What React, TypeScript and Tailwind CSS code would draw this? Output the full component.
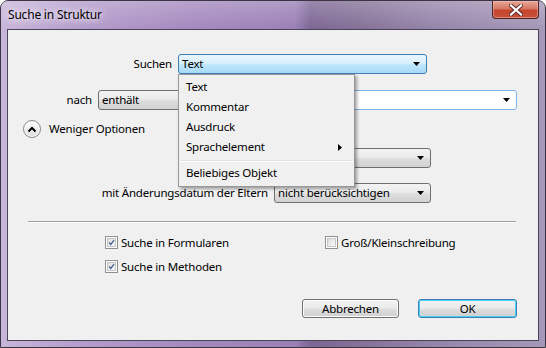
import React from 'react';

type ComboKind = 'plain' | 'focus' | 'edit';

const comboStyles: Record<ComboKind, string> = {
  plain:
    'border-[#707070] bg-[linear-gradient(#f3f3f3_0%,#ebebeb_45%,#dddddd_55%,#d2d2d2_100%)]',
  focus:
    'border-[#3c7fb1] bg-[linear-gradient(#eaf6fd_0%,#d9f0fc_45%,#bee6fd_55%,#a7d9f5_100%)]',
  edit: 'border-[#7eb4ea] bg-white',
};

function DownArrow() {
  return (
    <svg width="7" height="4" viewBox="0 0 7 4" className="shrink-0">
      <path d="M0 0 H7 L3.5 4 Z" fill="#000" />
    </svg>
  );
}

function Combo({ value, kind, className }: { value: string; kind: ComboKind; className: string }) {
  return (
    <div
      className={`flex items-center justify-between h-[20px] rounded-[3px] border pl-[3px] pr-[6px] ${comboStyles[kind]} ${className}`}
    >
      <span className="whitespace-nowrap">{value}</span>
      <DownArrow />
    </div>
  );
}

function CheckBox({ checked, label }: { checked: boolean; label: string }) {
  return (
    <div className="flex items-center h-[13px]">
      <div className="w-[13px] h-[13px] border border-[#8e8f8f] bg-white p-[1px] shrink-0">
        <div className="w-full h-full border border-[#c6c6c6] bg-[linear-gradient(135deg,#dcdcdc,#fbfbfb)] flex items-center justify-center">
          {checked && (
            <svg width="9" height="9" viewBox="0 0 9 9">
              <path d="M1.5 4.5 L3.6 7 L7.8 1.5" stroke="#3d5a8c" strokeWidth="1.6" fill="none" />
            </svg>
          )}
        </div>
      </div>
      <span className="ml-[3px] whitespace-nowrap">{label}</span>
    </div>
  );
}

const menuItems = ['Text', 'Kommentar', 'Ausdruck'];

export default function App() {
  return (
    <div className="w-[546px] h-[348px] overflow-hidden bg-white font-['Noto_Sans',sans-serif] text-[11.5px] tracking-[-0.2px] text-black">
      <div className="w-[546px] h-[348px] rounded-t-[8px] border border-[#3a3444] flex flex-col bg-[linear-gradient(90deg,#c8b6da_0%,#b49ccb_15%,#a489be_35%,#9b80b7_54%,#7c6694_57%,#857197_66%,#9685aa_80%,#a698b8_100%)]">
        {/* title bar */}
        <div className="h-[28px] flex justify-between items-start pl-[7px] pr-[6px] bg-[linear-gradient(180deg,rgba(255,255,255,0.22),rgba(255,255,255,0))]">
          <span className="mt-[5px] text-[12px] [text-shadow:0_0_6px_#fff,0_0_10px_#f0e8f8]">
            Suche in Struktur
          </span>
          <div className="w-[47px] h-[18px] rounded-b-[4px] border border-t-0 border-[#4b2626] bg-[linear-gradient(180deg,#e6a99a_0%,#d47863_45%,#c4432c_55%,#c9523b_100%)] flex items-center justify-center shadow-[inset_0_0_0_1px_rgba(255,200,190,0.45)]">
            <svg width="14" height="12" viewBox="0 0 14 12">
              <path d="M2 1.5 L12 10.5 M12 1.5 L2 10.5" stroke="#5a2a2a" strokeWidth="4" strokeLinecap="square" />
              <path d="M2 1.5 L12 10.5 M12 1.5 L2 10.5" stroke="#fff" strokeWidth="2.2" strokeLinecap="square" />
            </svg>
          </div>
        </div>

        {/* client area */}
        <div className="relative mx-[6px] h-[312px] border border-[#4a4458] bg-[#f0f0f0] flex flex-col">
          {/* Suchen */}
          <div className="flex items-center h-[20px] mt-[24px]">
            <span className="w-[164px] text-right">Suchen</span>
            <Combo value="Text" kind="focus" className="ml-[6px] w-[249px]" />
          </div>

          {/* nach */}
          <div className="flex items-center h-[20px] mt-[16px]">
            <span className="w-[84px] text-right">nach</span>
            <Combo value="enthält" kind="plain" className="ml-[6px] w-[134px]" />
            <Combo value="" kind="edit" className="ml-[4px] w-[281px]" />
          </div>

          {/* Weniger Optionen */}
          <div className="flex items-center h-[18px] mt-[10px]">
            <div className="ml-[15px] w-[18px] h-[18px] rounded-full border border-[#8a8a8a] bg-[linear-gradient(180deg,#ffffff,#dcdcdc)] flex items-center justify-center shadow-[inset_0_0_0_1px_#fff]">
              <svg width="10" height="7" viewBox="0 0 10 7">
                <path d="M1.5 5.5 L5 2 L8.5 5.5" stroke="#000" strokeWidth="2" fill="none" />
              </svg>
            </div>
            <span className="ml-[8px]">Weniger Optionen</span>
          </div>

          {/* Im Ordner */}
          <div className="flex items-center h-[20px] mt-[10px]">
            <span className="w-[260px] text-right">Im Ordner</span>
            <Combo value="" kind="plain" className="ml-[6px] w-[157px]" />
          </div>

          {/* Änderungsdatum */}
          <div className="flex items-center h-[20px] mt-[15px]">
            <span className="w-[260px] text-right whitespace-nowrap">mit Änderungsdatum der Eltern</span>
            <Combo value="nicht berücksichtigen" kind="plain" className="ml-[6px] w-[157px]" />
          </div>

          <div className="mt-[18px] ml-[20px] w-[488px] h-px bg-[#a0a0a0] shadow-[0_1px_0_#fff]" />

          {/* checkboxes */}
          <div className="mt-[14px] ml-[97px] grid grid-cols-[220px_1fr] gap-y-[11px]">
            <CheckBox checked label="Suche in Formularen" />
            <CheckBox checked={false} label="Groß/Kleinschreibung" />
            <CheckBox checked label="Suche in Methoden" />
          </div>

          {/* buttons */}
          <div className="mt-[26px] flex justify-end gap-[19px] pr-[21px]">
            <button className="w-[97px] h-[19px] rounded-[3px] border border-[#707070] bg-[linear-gradient(#f2f2f2_0%,#ebebeb_45%,#dddddd_55%,#cfcfcf_100%)] shadow-[inset_0_0_0_1px_#fcfcfc] leading-none">
              Abbrechen
            </button>
            <button className="w-[99px] h-[19px] rounded-[3px] border border-[#3c7fb1] bg-[linear-gradient(#f2f2f2_0%,#ebebeb_45%,#dddddd_55%,#cfcfcf_100%)] shadow-[inset_0_0_0_1px_#48d0f8] leading-none">
              OK
            </button>
          </div>

          {/* dropdown menu */}
          <div className="absolute left-[170px] top-[44px] w-[177px] border border-[#979797] bg-[#f0f0f0] pt-[2px] pb-[3px] px-[2px] shadow-[2px_2px_3px_rgba(0,0,0,0.35)]">
            {menuItems.map((item) => (
              <div key={item} className="h-[20px] flex items-center pl-[5px]">
                {item}
              </div>
            ))}
            <div className="h-[20px] flex items-center justify-between pl-[5px] pr-[10px]">
              <span>Sprachelement</span>
              <svg width="4" height="7" viewBox="0 0 4 7">
                <path d="M0 0 L4 3.5 L0 7 Z" fill="#000" />
              </svg>
            </div>
            <div className="h-[6px] flex items-center">
              <div className="w-full h-px bg-[#e0e0e0] shadow-[0_1px_0_#fff]" />
            </div>
            <div className="h-[20px] flex items-center pl-[5px]">Beliebiges Objekt</div>
          </div>
        </div>
      </div>
    </div>
  );
}
